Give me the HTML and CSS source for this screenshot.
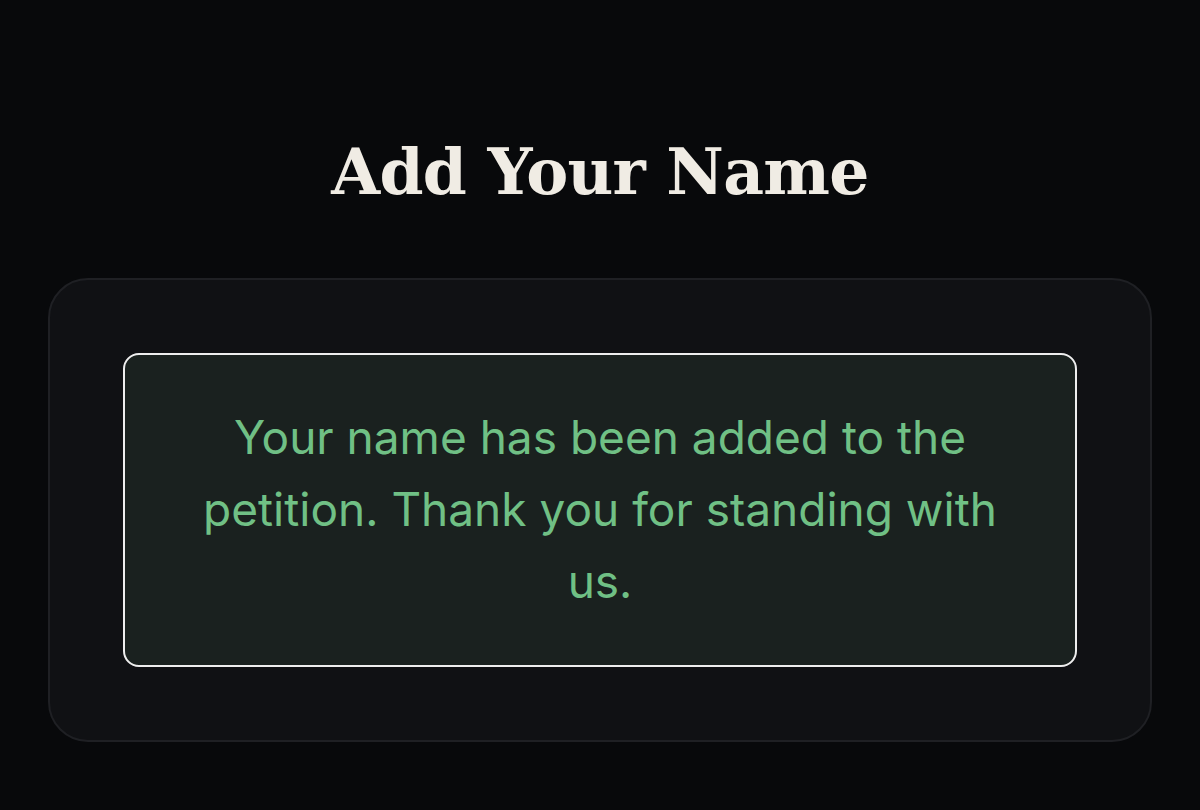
FILE: index.html
```html
<!DOCTYPE html>
<html lang="en">
<head>
<meta charset="utf-8">
<title>Add Your Name</title>
<link rel="stylesheet" href="styles.css">
</head>
<body>
<main class="page">
  <h1 class="title">Add Your Name</h1>
  <section class="card">
    <div class="success">
      <p class="success-text">Your name has been added to the petition. Thank you for standing with us.</p>
    </div>
  </section>
</main>
</body>
</html>
```
FILE: styles.css
```css
html, body {
  margin: 0;
  padding: 0;
  background: #08090b;
  height: 100%;
}
.page {
  display: flex;
  flex-direction: column;
  align-items: center;
  padding: 122px 48px 0;
}
.title {
  margin: 0;
  font-family: "DejaVu Serif", "Liberation Serif", serif;
  font-weight: 700;
  font-size: 63px;
  line-height: 100px;
  color: #f0ece4;
  letter-spacing: -0.7px;
}
.card {
  box-sizing: border-box;
  margin-top: 56px;
  width: 1104px;
  padding: 73px;
  background: #101114;
  border: 2px solid #1f2024;
  border-radius: 40px;
}
.success {
  box-sizing: border-box;
  border: 2px solid #eeeeee;
  border-radius: 16px;
  background: #1a211f;
  padding: 46px 60px 48px;
}
.success-text {
  margin: 0;
  text-align: center;
  font-family: "Inter", "Noto Sans", sans-serif;
  font-size: 46px;
  line-height: 72px;
  color: #70c085;
}
```
